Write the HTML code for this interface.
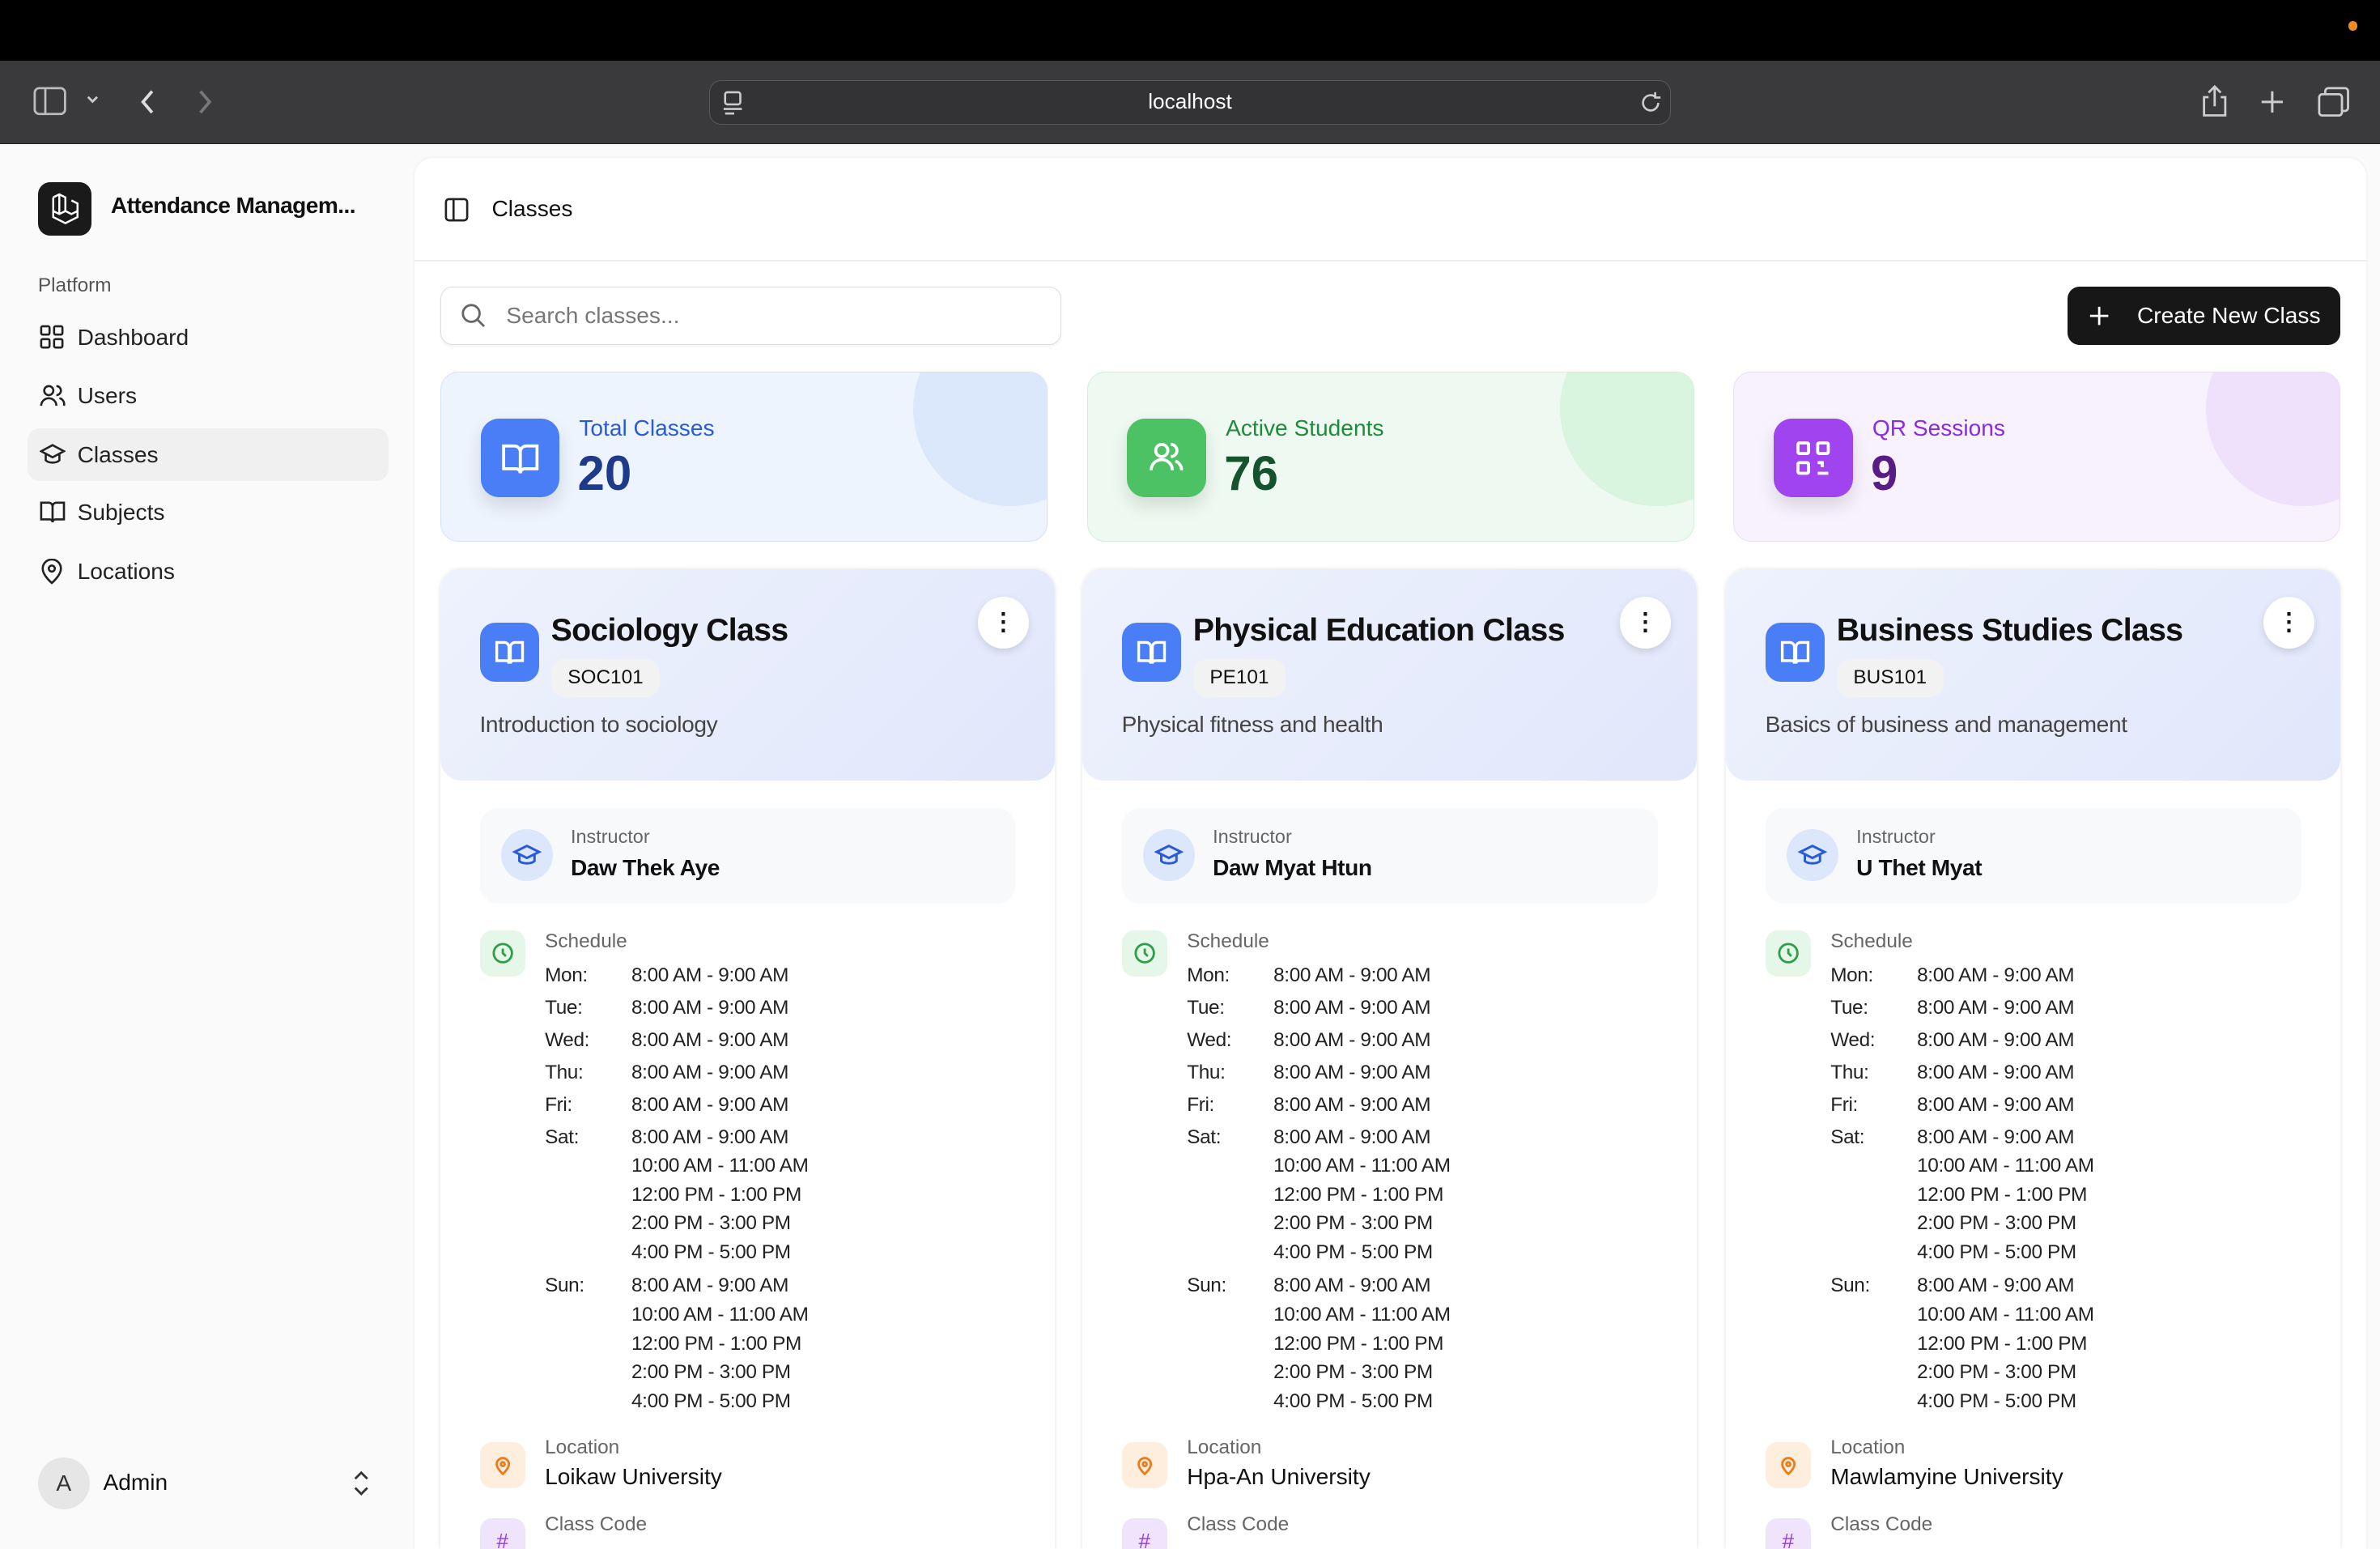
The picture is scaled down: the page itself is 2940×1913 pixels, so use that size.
<!DOCTYPE html>
<html><head><meta charset="utf-8"><style>
html{zoom:1.875;overflow:hidden;height:1020px}
*{box-sizing:border-box;margin:0;padding:0}
body{width:1568px;height:1020px;overflow:hidden;background:#fafafa;font-family:"Liberation Sans",sans-serif;color:#111;position:relative}
.abs{position:absolute}
.top{left:0;top:0;width:1568px;height:40px;background:#000}
.tb{left:0;top:40px;width:1568px;height:55px;background:#3a3a3c;border-bottom:1px solid #222}
.url{left:467px;top:53px;width:634px;height:29px;border:1px solid #59595c;border-radius:8px;background:#333335;color:#fff;font-size:14px;text-align:center;line-height:27px}
.side{left:0;top:96px;width:272px;height:924px;background:#fafafa}
.nav{position:absolute;left:18px;width:238px;height:35px;border-radius:8px;font-size:15px;line-height:35px;padding-left:33px;color:#222}
.nav svg{position:absolute;left:8px;top:9px}
.main{left:273px;top:104px;width:1286px;height:916px;background:#fff;border-radius:12px 12px 0 0;box-shadow:0 0 2px rgba(0,0,0,.08)}
.stat{position:absolute;top:245px;width:400px;height:112px;border-radius:12px;overflow:hidden}
.stat .ic{position:absolute;left:26px;top:30px;width:52px;height:52px;border-radius:12px;box-shadow:0 6px 12px rgba(0,0,0,.12)}
.stat .lb{position:absolute;left:91px;top:28px;font-size:15px}
.stat .nm{position:absolute;left:90px;top:48px;font-size:32px;font-weight:bold}
.stat .circ{position:absolute;right:-40px;top:-40px;width:128px;height:128px;border-radius:50%}
.card{position:absolute;top:375px;width:405px;height:645px;overflow:hidden;background:#fff;border-radius:14px 14px 0 0;box-shadow:0 0 3px rgba(0,0,0,.12)}
.ch{position:absolute;left:0;top:0;width:405px;height:139px;border-radius:14px;background:linear-gradient(135deg,#eef2fd,#e1e7fb)}
.ch .ic{position:absolute;left:26px;top:35px;width:39px;height:39px;border-radius:10px;background:#4a7ef7}
.ch .t{position:absolute;left:73px;top:28px;font-size:21px;font-weight:bold;color:#111;letter-spacing:-.4px;white-space:nowrap}
.ch .code{position:absolute;left:73px;top:59px;height:25px;padding:0 11px;border-radius:9px;background:#f2f2f2;font-size:13px;line-height:25px}
.ch .d{position:absolute;left:26px;top:94px;font-size:15px;color:#444;letter-spacing:-.2px}
.ch .dots{position:absolute;right:17px;top:18px;width:34px;height:34px;border-radius:50%;background:#fff;box-shadow:0 2px 5px rgba(0,0,0,.12);text-align:center;line-height:34px;font-weight:bold;font-size:16px}
.ins{position:absolute;left:26px;top:157px;width:353px;height:63px;border-radius:12px;background:#f8f9fb}
.ins .c{position:absolute;left:14px;top:14px;width:34px;height:34px;border-radius:50%;background:#dde7fb}
.ins .a{position:absolute;left:60px;top:12px;font-size:12.5px;color:#666}
.ins .b{position:absolute;left:60px;top:31px;font-size:15px;font-weight:bold;color:#111;letter-spacing:-.2px}
.sq{position:absolute;left:26px;width:30px;height:30px;border-radius:8px}
.lab{position:absolute;left:69px;font-size:13px;color:#666}
.val{position:absolute;left:69px;font-size:15px;color:#111;white-space:nowrap}
.sch{position:absolute;left:69px;top:258px;font-size:13px;color:#222;line-height:19px;white-space:nowrap;letter-spacing:-.2px}
.sch .r{position:relative;height:21.3px}
.sch .day{position:absolute;left:0;top:0}
.sch .tm{position:absolute;left:57px;top:0;white-space:nowrap}
</style></head><body>
<div class="abs top"><div class="abs" style="left:1547px;top:14px;width:6px;height:6px;border-radius:50%;background:#f08a24"></div></div>
<div class="abs tb">
<svg class="abs" style="left:22px;top:17px" width="22" height="19" viewBox="0 0 22 19" fill="none" stroke="#bbb" stroke-width="1.5"><rect x="1" y="1" width="20" height="17" rx="3"/><line x1="8" y1="1" x2="8" y2="18"/></svg>
<svg class="abs" style="left:56px;top:22px" width="10" height="8" viewBox="0 0 10 8" fill="none" stroke="#ccc" stroke-width="1.5"><path d="M2 2l3 3 3-3"/></svg>
<svg class="abs" style="left:91px;top:18px" width="12" height="18" viewBox="0 0 12 18" fill="none" stroke="#ddd" stroke-width="2"><path d="M9 2L3 9l6 7"/></svg>
<svg class="abs" style="left:129px;top:18px" width="12" height="18" viewBox="0 0 12 18" fill="none" stroke="#777" stroke-width="2"><path d="M3 2l6 7-6 7"/></svg>
<svg class="abs" style="left:1449px;top:16px" width="20" height="22" viewBox="0 0 20 22" fill="none" stroke="#ccc" stroke-width="1.5"><path d="M6 8H3v12h14V8h-3M10 14V2M6 5l4-4 4 4"/></svg>
<svg class="abs" style="left:1488px;top:18px" width="18" height="18" viewBox="0 0 18 18" stroke="#ccc" stroke-width="1.6"><path d="M9 2v14M2 9h14"/></svg>
<svg class="abs" style="left:1527px;top:17px" width="22" height="20" viewBox="0 0 22 20" fill="none" stroke="#ccc" stroke-width="1.5"><rect x="1" y="5" width="15" height="14" rx="2"/><path d="M5 5V3a2 2 0 012-2h11a2 2 0 012 2v11a2 2 0 01-2 2h-2"/></svg>
</div>
<div class="abs url">localhost
<svg class="abs" style="left:8px;top:6px" width="14" height="16" viewBox="0 0 14 16" fill="none" stroke="#ccc" stroke-width="1.4"><rect x="2" y="1" width="10" height="8" rx="1.5"/><path d="M1 12h12M2 15h6"/></svg>
<svg class="abs" style="left:612px;top:6px" width="16" height="16" viewBox="0 0 16 16" fill="none" stroke="#ccc" stroke-width="1.4"><path d="M13 8a5 5 0 11-2-4M11 1v3.5h3.5"/></svg>
</div>
<div class="abs side">
<div class="abs" style="left:25px;top:24px;width:35px;height:35px;border-radius:8px;background:#1a1a1a"><svg width="35" height="35" viewBox="0 0 35 35" fill="none" stroke="#fff" stroke-width="1.3"><path d="M10 10l4-2 4 2v9l4 2 4-2v-5l-4-2M18 19l-4 2-4-2V10M14 8v13M10 19v4l8 4 8-4v-5"/></svg></div>
<div class="abs" style="left:73px;top:31px;font-size:15px;font-weight:bold;letter-spacing:-.3px">Attendance Managem...</div>
<div class="abs" style="left:25px;top:85px;font-size:13px;color:#555">Platform</div>
<div class="nav" style="top:109px"><svg width="16" height="16" viewBox="0 0 16 16" fill="none" stroke="#222" stroke-width="1.4"><rect x="1" y="1" width="5.5" height="5.5" rx="1"/><rect x="9.5" y="1" width="5.5" height="5.5" rx="1"/><rect x="1" y="9.5" width="5.5" height="5.5" rx="1"/><rect x="9.5" y="9.5" width="5.5" height="5.5" rx="1"/></svg>Dashboard</div>
<div class="nav" style="top:147px"><svg width="17" height="16" viewBox="0 0 17 16" fill="none" stroke="#222" stroke-width="1.4"><circle cx="6" cy="5" r="3"/><path d="M1 15a5 5 0 0110 0M11 2a3 3 0 010 6M13 10a4 4 0 013 5"/></svg>Users</div>
<div class="nav" style="top:186px;background:#f0f0f0"><svg width="17" height="16" viewBox="0 0 17 16" fill="none" stroke="#222" stroke-width="1.4"><path d="M1 6l7.5-4L16 6l-7.5 4zM4 8v4c2 2 7 2 9 0V8"/></svg>Classes</div>
<div class="nav" style="top:224px"><svg width="17" height="16" viewBox="0 0 17 16" fill="none" stroke="#222" stroke-width="1.4"><path d="M1 2h5a2.5 2.5 0 012.5 2.5V15A2 2 0 006.5 13H1zM16 2h-5a2.5 2.5 0 00-2.5 2.5V15a2 2 0 012-2H16z"/></svg>Subjects</div>
<div class="nav" style="top:263px"><svg width="16" height="17" viewBox="0 0 16 17" fill="none" stroke="#222" stroke-width="1.4"><path d="M8 16s6-5 6-9.5a6 6 0 00-12 0C2 11 8 16 8 16z"/><circle cx="8" cy="6.5" r="2"/></svg>Locations</div>
<div class="abs" style="left:25px;top:864px;width:34px;height:34px;border-radius:50%;background:#e6e6e6;text-align:center;line-height:34px;font-size:15px;color:#333">A</div>
<div class="abs" style="left:68px;top:872px;font-size:15px">Admin</div>
<svg class="abs" style="left:232px;top:872px" width="12" height="18" viewBox="0 0 12 18" fill="none" stroke="#333" stroke-width="1.5"><path d="M2 6l4-4 4 4M2 12l4 4 4-4"/></svg>
</div>
<div class="abs main">
<svg class="abs" style="left:20px;top:26px" width="16" height="16" viewBox="0 0 16 16" fill="none" stroke="#222" stroke-width="1.4"><rect x="1" y="1" width="14" height="14" rx="2"/><line x1="6" y1="1" x2="6" y2="15"/></svg>
<div class="abs" style="left:51px;top:25px;font-size:15px">Classes</div>
<div class="abs" style="left:0;top:67px;width:1286px;height:1px;background:#eee"></div>
</div>
<div class="abs" style="left:290px;top:189px;width:409px;height:38px;border:1px solid #ddd;border-radius:8px;background:#fff;box-shadow:0 1px 2px rgba(0,0,0,.05)">
<svg class="abs" style="left:13px;top:10px" width="17" height="17" viewBox="0 0 17 17" fill="none" stroke="#666" stroke-width="1.5"><circle cx="7" cy="7" r="5.5"/><path d="M11 11l4.5 4.5"/></svg>
<div class="abs" style="left:43px;top:10px;font-size:15px;color:#777">Search classes...</div></div>
<div class="abs" style="left:1362px;top:189px;width:180px;height:38px;border-radius:8px;background:#171717;color:#fff;font-size:15px;line-height:38px;padding-left:46px;white-space:nowrap">Create New Class
<svg class="abs" style="left:14px;top:12px" width="14" height="14" viewBox="0 0 14 14" stroke="#fff" stroke-width="1.5"><path d="M7 1v12M1 7h12"/></svg></div>

<div class="stat" style="left:290px;background:#eef4fe;border:1px solid #d3e2fb"><div class="circ" style="background:#dbe7fb"></div>
<div class="ic" style="background:#4a7ef7"><svg width="52" height="52" viewBox="0 0 52 52" fill="none" stroke="#fff" stroke-width="2"><path d="M15 18h7a4 4 0 014 4v14a3 3 0 00-3-3h-8zM37 18h-7a4 4 0 00-4 4v14a3 3 0 013-3h8z"/></svg></div>
<div class="lb" style="color:#2a5bd7">Total Classes</div><div class="nm" style="color:#1e3a8a">20</div></div>
<div class="stat" style="left:716px;background:#eefaf1;border:1px solid #d0f0d9"><div class="circ" style="background:#d9f4df"></div>
<div class="ic" style="background:#4cc264"><svg width="52" height="52" viewBox="0 0 52 52" fill="none" stroke="#fff" stroke-width="2"><circle cx="23" cy="21" r="4"/><path d="M16 34a7 7 0 0114 0M29 17a4 4 0 010 8M32 28a6 6 0 014 6"/></svg></div>
<div class="lb" style="color:#1f8a3a">Active Students</div><div class="nm" style="color:#14532d">76</div></div>
<div class="stat" style="left:1142px;background:#f7f2fe;border:1px solid #ebdcfb"><div class="circ" style="background:#efe1fc"></div>
<div class="ic" style="background:#a044f0"><svg width="52" height="52" viewBox="0 0 52 52" fill="none" stroke="#fff" stroke-width="2"><rect x="16" y="16" width="7" height="7" rx="1"/><rect x="29" y="16" width="7" height="7" rx="1"/><rect x="16" y="29" width="7" height="7" rx="1"/><path d="M29 29h3v3M36 29v0M29 36h7"/></svg></div>
<div class="lb" style="color:#8a2be2">QR Sessions</div><div class="nm" style="color:#581c87">9</div></div>

<div class="card" style="left:290px"><div class="ch"><div class="ic"><svg width="39" height="39" viewBox="0 0 39 39" fill="none" stroke="#fff" stroke-width="1.8"><path d="M11 13h5a3 3 0 013 3v11a2 2 0 00-2-2h-6zM28 13h-5a3 3 0 00-3 3v11a2 2 0 012-2h6z"/></svg></div><div class="t">Sociology Class</div><div class="code">SOC101</div><div class="d">Introduction to sociology</div><div class="dots">⋮</div></div>
<div class="ins"><div class="c"><svg width="34" height="34" viewBox="0 0 34 34" fill="none" stroke="#2a5bd7" stroke-width="1.6"><path d="M9 15l8-4 8 4-8 4zM12 17v4c2 2 8 2 10 0v-4"/></svg></div><div class="a">Instructor</div><div class="b">Daw Thek Aye</div></div>
<div class="sq" style="top:238px;background:#e4f7e8"><svg width="30" height="30" viewBox="0 0 30 30" fill="none" stroke="#2e9e48" stroke-width="1.5"><circle cx="15" cy="15" r="6"/><path d="M15 12v3l2 2"/></svg></div><div class="lab" style="top:238px">Schedule</div>
<div class="sch"><div class="r"><span class="day">Mon:</span><span class="tm">8:00 AM - 9:00 AM</span></div><div class="r"><span class="day">Tue:</span><span class="tm">8:00 AM - 9:00 AM</span></div><div class="r"><span class="day">Wed:</span><span class="tm">8:00 AM - 9:00 AM</span></div><div class="r"><span class="day">Thu:</span><span class="tm">8:00 AM - 9:00 AM</span></div><div class="r"><span class="day">Fri:</span><span class="tm">8:00 AM - 9:00 AM</span></div><div class="r" style="height:98px"><span class="day">Sat:</span><span class="tm">8:00 AM - 9:00 AM<br>10:00 AM - 11:00 AM<br>12:00 PM - 1:00 PM<br>2:00 PM - 3:00 PM<br>4:00 PM - 5:00 PM</span></div><div class="r"><span class="day">Sun:</span><span class="tm">8:00 AM - 9:00 AM<br>10:00 AM - 11:00 AM<br>12:00 PM - 1:00 PM<br>2:00 PM - 3:00 PM<br>4:00 PM - 5:00 PM</span></div></div>
<div class="sq" style="top:575px;background:#fdeedd"><svg width="30" height="30" viewBox="0 0 30 30" fill="none" stroke="#f07a1a" stroke-width="1.5"><path d="M15 21s4-3.5 4-6.5a4 4 0 00-8 0c0 3 4 6.5 4 6.5z"/><circle cx="15" cy="14.5" r="1.3"/></svg></div><div class="lab" style="top:571px">Location</div><div class="val" style="top:589px">Loikaw University</div>
<div class="sq" style="top:625px;background:#efe4fc;color:#9040e0;text-align:center;line-height:30px;font-size:14px">#</div><div class="lab" style="top:622px">Class Code</div>
</div>

<div class="card" style="left:713px"><div class="ch"><div class="ic"><svg width="39" height="39" viewBox="0 0 39 39" fill="none" stroke="#fff" stroke-width="1.8"><path d="M11 13h5a3 3 0 013 3v11a2 2 0 00-2-2h-6zM28 13h-5a3 3 0 00-3 3v11a2 2 0 012-2h6z"/></svg></div><div class="t">Physical Education Class</div><div class="code">PE101</div><div class="d">Physical fitness and health</div><div class="dots">⋮</div></div>
<div class="ins"><div class="c"><svg width="34" height="34" viewBox="0 0 34 34" fill="none" stroke="#2a5bd7" stroke-width="1.6"><path d="M9 15l8-4 8 4-8 4zM12 17v4c2 2 8 2 10 0v-4"/></svg></div><div class="a">Instructor</div><div class="b">Daw Myat Htun</div></div>
<div class="sq" style="top:238px;background:#e4f7e8"><svg width="30" height="30" viewBox="0 0 30 30" fill="none" stroke="#2e9e48" stroke-width="1.5"><circle cx="15" cy="15" r="6"/><path d="M15 12v3l2 2"/></svg></div><div class="lab" style="top:238px">Schedule</div>
<div class="sch"><div class="r"><span class="day">Mon:</span><span class="tm">8:00 AM - 9:00 AM</span></div><div class="r"><span class="day">Tue:</span><span class="tm">8:00 AM - 9:00 AM</span></div><div class="r"><span class="day">Wed:</span><span class="tm">8:00 AM - 9:00 AM</span></div><div class="r"><span class="day">Thu:</span><span class="tm">8:00 AM - 9:00 AM</span></div><div class="r"><span class="day">Fri:</span><span class="tm">8:00 AM - 9:00 AM</span></div><div class="r" style="height:98px"><span class="day">Sat:</span><span class="tm">8:00 AM - 9:00 AM<br>10:00 AM - 11:00 AM<br>12:00 PM - 1:00 PM<br>2:00 PM - 3:00 PM<br>4:00 PM - 5:00 PM</span></div><div class="r"><span class="day">Sun:</span><span class="tm">8:00 AM - 9:00 AM<br>10:00 AM - 11:00 AM<br>12:00 PM - 1:00 PM<br>2:00 PM - 3:00 PM<br>4:00 PM - 5:00 PM</span></div></div>
<div class="sq" style="top:575px;background:#fdeedd"><svg width="30" height="30" viewBox="0 0 30 30" fill="none" stroke="#f07a1a" stroke-width="1.5"><path d="M15 21s4-3.5 4-6.5a4 4 0 00-8 0c0 3 4 6.5 4 6.5z"/><circle cx="15" cy="14.5" r="1.3"/></svg></div><div class="lab" style="top:571px">Location</div><div class="val" style="top:589px">Hpa-An University</div>
<div class="sq" style="top:625px;background:#efe4fc;color:#9040e0;text-align:center;line-height:30px;font-size:14px">#</div><div class="lab" style="top:622px">Class Code</div>
</div>

<div class="card" style="left:1137px"><div class="ch"><div class="ic"><svg width="39" height="39" viewBox="0 0 39 39" fill="none" stroke="#fff" stroke-width="1.8"><path d="M11 13h5a3 3 0 013 3v11a2 2 0 00-2-2h-6zM28 13h-5a3 3 0 00-3 3v11a2 2 0 012-2h6z"/></svg></div><div class="t">Business Studies Class</div><div class="code">BUS101</div><div class="d">Basics of business and management</div><div class="dots">⋮</div></div>
<div class="ins"><div class="c"><svg width="34" height="34" viewBox="0 0 34 34" fill="none" stroke="#2a5bd7" stroke-width="1.6"><path d="M9 15l8-4 8 4-8 4zM12 17v4c2 2 8 2 10 0v-4"/></svg></div><div class="a">Instructor</div><div class="b">U Thet Myat</div></div>
<div class="sq" style="top:238px;background:#e4f7e8"><svg width="30" height="30" viewBox="0 0 30 30" fill="none" stroke="#2e9e48" stroke-width="1.5"><circle cx="15" cy="15" r="6"/><path d="M15 12v3l2 2"/></svg></div><div class="lab" style="top:238px">Schedule</div>
<div class="sch"><div class="r"><span class="day">Mon:</span><span class="tm">8:00 AM - 9:00 AM</span></div><div class="r"><span class="day">Tue:</span><span class="tm">8:00 AM - 9:00 AM</span></div><div class="r"><span class="day">Wed:</span><span class="tm">8:00 AM - 9:00 AM</span></div><div class="r"><span class="day">Thu:</span><span class="tm">8:00 AM - 9:00 AM</span></div><div class="r"><span class="day">Fri:</span><span class="tm">8:00 AM - 9:00 AM</span></div><div class="r" style="height:98px"><span class="day">Sat:</span><span class="tm">8:00 AM - 9:00 AM<br>10:00 AM - 11:00 AM<br>12:00 PM - 1:00 PM<br>2:00 PM - 3:00 PM<br>4:00 PM - 5:00 PM</span></div><div class="r"><span class="day">Sun:</span><span class="tm">8:00 AM - 9:00 AM<br>10:00 AM - 11:00 AM<br>12:00 PM - 1:00 PM<br>2:00 PM - 3:00 PM<br>4:00 PM - 5:00 PM</span></div></div>
<div class="sq" style="top:575px;background:#fdeedd"><svg width="30" height="30" viewBox="0 0 30 30" fill="none" stroke="#f07a1a" stroke-width="1.5"><path d="M15 21s4-3.5 4-6.5a4 4 0 00-8 0c0 3 4 6.5 4 6.5z"/><circle cx="15" cy="14.5" r="1.3"/></svg></div><div class="lab" style="top:571px">Location</div><div class="val" style="top:589px">Mawlamyine University</div>
<div class="sq" style="top:625px;background:#efe4fc;color:#9040e0;text-align:center;line-height:30px;font-size:14px">#</div><div class="lab" style="top:622px">Class Code</div>
</div>
</body></html>
